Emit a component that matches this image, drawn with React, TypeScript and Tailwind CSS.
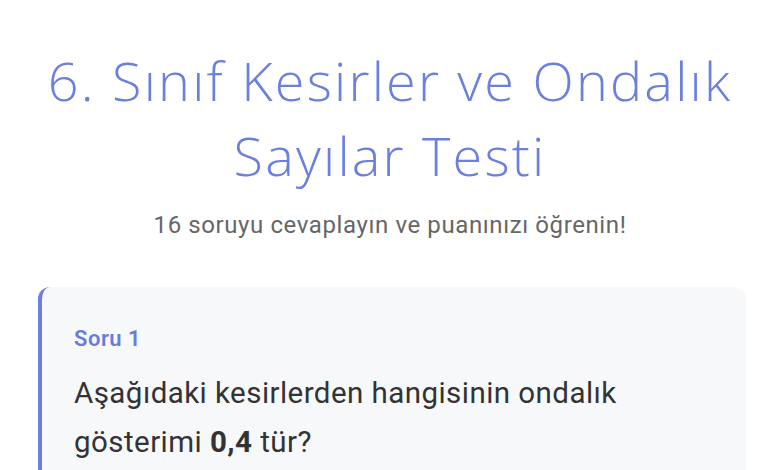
import React from "react";

export default function App() {
  return (
    <div className="w-[780px] h-[470px] overflow-hidden bg-white">
      <div className="pt-[43px] text-center">
        <h1
          className="text-[54px] leading-[75px] font-light text-[#6b7fdf] tracking-[2.2px]"
          style={{ fontFamily: '"Open Sans", sans-serif' }}
        >
          6. Sınıf Kesirler ve Ondalık
          <br />
          Sayılar Testi
        </h1>
        <p
          className="mt-[16px] text-[24px] leading-[33px] tracking-[0.6px] text-[#666666]"
          style={{ fontFamily: "Roboto, sans-serif" }}
        >
          16 soruyu cevaplayın ve puanınızı öğrenin!
        </p>
      </div>
      <div
        className="mt-[45px] ml-[38px] w-[708px] rounded-[12px] border-l-[4px] border-[#6b7fdf] bg-[#f7f8fa] pl-[32px] pr-[60px] pt-[36px] pb-[30px]"
        style={{ fontFamily: "Roboto, sans-serif" }}
      >
        <div className="text-[22px] leading-[31px] tracking-[0.5px] font-semibold text-[#6a7cd8]">Soru 1</div>
        <p className="mt-[15px] text-[29.5px] leading-[49px] tracking-[0.45px] text-[#333333]">
          Aşağıdaki kesirlerden hangisinin ondalık gösterimi <span className="font-bold">0,4</span> tür?
        </p>
      </div>
    </div>
  );
}
